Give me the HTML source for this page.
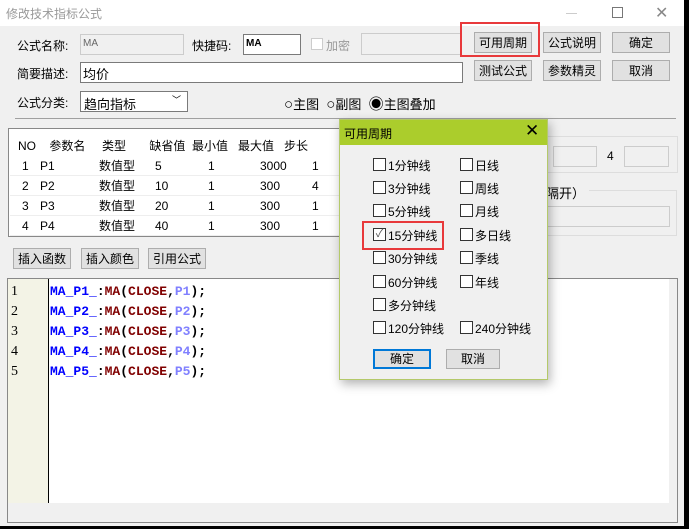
<!DOCTYPE html>
<html><head><meta charset="utf-8"><style>
*{box-sizing:border-box;margin:0;padding:0}
body{width:689px;height:529px;background:#000;position:relative;overflow:hidden;font-family:"Liberation Sans","Noto Sans CJK SC",sans-serif;font-size:12px;color:#000}
.a{position:absolute}
.btn{position:absolute;background:#e1e1e1;border:1px solid #adadad;text-align:center;line-height:20px;font-size:12px}
.inp{position:absolute;background:#fff;border:1px solid #7a7a7a}
.cb{position:absolute;width:13px;height:13px;border:1px solid #333;background:#fff}
.mono{font-family:"Liberation Mono",monospace;font-weight:bold;font-size:13px}
</style></head><body>
<div class="a" style="left:0;top:0;width:684px;height:526px;background:#f0f0f0"></div>
<div class="a" style="left:0;top:0;width:684px;height:26px;background:#fff"></div>
<div class="a" style="left:6px;top:5px;color:#999;font-size:12px">修改技术指标公式</div>
<div class="a" style="left:566px;top:13px;width:11px;height:1px;background:#ccc"></div>
<div class="a" style="left:612px;top:7px;width:11px;height:11px;border:1px solid #777"></div>
<div class="a" style="left:655px;top:3px;font-size:16px;color:#888">✕</div>

<div class="a" style="left:17px;top:37px">公式名称:</div>
<div class="inp" style="left:80px;top:34px;width:104px;height:21px;background:#f0f0f0;border-color:#ccc;font-size:10px;color:#666;padding:3px 2px">MA</div>
<div class="a" style="left:192px;top:37px">快捷码:</div>
<div class="inp" style="left:243px;top:34px;width:58px;height:21px;font-size:10px;font-weight:bold;padding:3px 2px">MA</div>
<div class="a" style="left:311px;top:38px;width:12px;height:12px;border:1px solid #ccc;background:#fff"></div>
<div class="a" style="left:326px;top:37px;color:#999">加密</div>
<div class="inp" style="left:361px;top:33px;width:100px;height:22px;background:#f0f0f0;border-color:#ccc"></div>
<div class="a" style="left:460px;top:22px;width:80px;height:35px;border:2px solid #e8393b"></div>
<div class="btn" style="left:474px;top:32px;width:58px;height:21px">可用周期</div>
<div class="btn" style="left:543px;top:32px;width:58px;height:21px">公式说明</div>
<div class="btn" style="left:612px;top:32px;width:58px;height:21px">确定</div>
<div class="a" style="left:17px;top:65px">简要描述:</div>
<div class="inp" style="left:80px;top:62px;width:383px;height:21px;padding:1px 2px;font-size:13px">均价</div>
<div class="btn" style="left:474px;top:60px;width:58px;height:21px">测试公式</div>
<div class="btn" style="left:543px;top:60px;width:58px;height:21px">参数精灵</div>
<div class="btn" style="left:612px;top:60px;width:58px;height:21px">取消</div>
<div class="a" style="left:17px;top:94px">公式分类:</div>
<div class="inp" style="left:80px;top:91px;width:108px;height:21px;padding:2px 3px;font-size:13px">趋向指标<span style="position:absolute;right:6px;top:1px;font-size:9px">﹀</span></div>
<div class="a" style="left:284px;top:93px;font-size:13px"><span style="font-size:15px">○</span>主图 &nbsp;<span style="font-size:15px">○</span>副图 &nbsp;<span style="font-size:15px">◉</span>主图叠加</div>
<div class="a" style="left:15px;top:118px;width:661px;height:1px;background:#a0a0a0"></div>

<div class="a" style="left:8px;top:128px;width:340px;height:109px;background:#fff;border:1px solid #888"></div>
<div class="a" style="left:18px;top:136px;line-height:20px;font-size:12px">
<div>NO&nbsp;&nbsp;&nbsp; 参数名&nbsp;&nbsp;&nbsp;&nbsp; 类型&nbsp;&nbsp;&nbsp;&nbsp;&nbsp;&nbsp; 缺省值&nbsp; 最小值&nbsp;&nbsp; 最大值&nbsp;&nbsp; 步长</div></div>
<div class="a" style="left:10px;top:156px;width:337px;font-size:12px;line-height:20px">
<div style="position:relative;height:20px;border-bottom:1px solid #eee"><span class="a" style="left:12px">1</span><span class="a" style="left:30px">P1</span><span class="a" style="left:89px">数值型</span><span class="a" style="left:145px">5</span><span class="a" style="left:198px">1</span><span class="a" style="left:250px">3000</span><span class="a" style="left:302px">1</span></div>
<div style="position:relative;height:20px;border-bottom:1px solid #eee"><span class="a" style="left:12px">2</span><span class="a" style="left:30px">P2</span><span class="a" style="left:89px">数值型</span><span class="a" style="left:145px">10</span><span class="a" style="left:198px">1</span><span class="a" style="left:250px">300</span><span class="a" style="left:302px">4</span></div>
<div style="position:relative;height:20px;border-bottom:1px solid #eee"><span class="a" style="left:12px">3</span><span class="a" style="left:30px">P3</span><span class="a" style="left:89px">数值型</span><span class="a" style="left:145px">20</span><span class="a" style="left:198px">1</span><span class="a" style="left:250px">300</span><span class="a" style="left:302px">1</span></div>
<div style="position:relative;height:20px;border-bottom:1px solid #eee"><span class="a" style="left:12px">4</span><span class="a" style="left:30px">P4</span><span class="a" style="left:89px">数值型</span><span class="a" style="left:145px">40</span><span class="a" style="left:198px">1</span><span class="a" style="left:250px">300</span><span class="a" style="left:302px">1</span></div>
</div>
<div class="a" style="left:540px;top:136px;width:138px;height:37px;border:1px solid #ddd"></div>
<div class="inp" style="left:553px;top:146px;width:44px;height:21px;background:#f0f0f0;border-color:#ccc"></div>
<div class="a" style="left:607px;top:149px">4</div>
<div class="inp" style="left:624px;top:146px;width:45px;height:21px;background:#f0f0f0;border-color:#ccc"></div>
<div class="a" style="left:540px;top:190px;width:137px;height:46px;border:1px solid #ddd"></div>
<div class="a" style="left:546px;top:183px;background:#f0f0f0;padding-right:4px;font-size:13px">隔开）</div>
<div class="inp" style="left:546px;top:206px;width:124px;height:21px;background:#f0f0f0;border-color:#ccc"></div>

<div class="btn" style="left:13px;top:248px;width:58px;height:21px">插入函数</div>
<div class="btn" style="left:81px;top:248px;width:58px;height:21px">插入颜色</div>
<div class="btn" style="left:148px;top:248px;width:58px;height:21px">引用公式</div>

<div class="a" style="left:7px;top:278px;width:671px;height:245px;border:1px solid #888;background:#f0f0f0"></div>
<div class="a" style="left:8px;top:279px;width:661px;height:224px;background:#fff"></div>
<div class="a" style="left:8px;top:279px;width:41px;height:224px;background:#f3f3e6;border-right:1px solid #000"></div>
<div class="a" style="left:11px;top:282px;font-family:'Liberation Serif',serif;font-size:14px;line-height:20px">1<br>2<br>3<br>4<br>5</div>
<div class="a mono" style="left:50px;top:282px;line-height:20px">
<div><span style="color:#0000ff">MA_P1_</span>:<span style="color:#800000">MA</span>(<span style="color:#800000">CLOSE</span>,<span style="color:#8080ff">P1</span>);</div>
<div><span style="color:#0000ff">MA_P2_</span>:<span style="color:#800000">MA</span>(<span style="color:#800000">CLOSE</span>,<span style="color:#8080ff">P2</span>);</div>
<div><span style="color:#0000ff">MA_P3_</span>:<span style="color:#800000">MA</span>(<span style="color:#800000">CLOSE</span>,<span style="color:#8080ff">P3</span>);</div>
<div><span style="color:#0000ff">MA_P4_</span>:<span style="color:#800000">MA</span>(<span style="color:#800000">CLOSE</span>,<span style="color:#8080ff">P4</span>);</div>
<div><span style="color:#0000ff">MA_P5_</span>:<span style="color:#800000">MA</span>(<span style="color:#800000">CLOSE</span>,<span style="color:#8080ff">P5</span>);</div>
</div>
<div class="a" style="left:669px;top:279px;width:8px;height:224px;background:#f0f0f0"></div>
<div class="a" style="left:8px;top:503px;width:661px;height:19px;background:#f0f0f0"></div>

<div class="a" style="left:339px;top:119px;width:209px;height:261px;background:#f0f0f0;border:1px solid #b4c96a;box-shadow:2px 4px 10px rgba(0,0,0,.3)"></div>
<div class="a" style="left:340px;top:120px;width:207px;height:25px;background:#abcd2c"></div>
<div class="a" style="left:344px;top:125px;font-size:12px">可用周期</div>
<div class="a" style="left:525px;top:121px;font-size:17px">✕</div>
<div class="cb" style="left:373px;top:158px"></div><div class="a" style="left:388px;top:157px">1分钟线</div>
<div class="cb" style="left:460px;top:158px"></div><div class="a" style="left:475px;top:157px">日线</div>
<div class="cb" style="left:373px;top:181px"></div><div class="a" style="left:388px;top:180px">3分钟线</div>
<div class="cb" style="left:460px;top:181px"></div><div class="a" style="left:475px;top:180px">周线</div>
<div class="cb" style="left:373px;top:204px"></div><div class="a" style="left:388px;top:203px">5分钟线</div>
<div class="cb" style="left:460px;top:204px"></div><div class="a" style="left:475px;top:203px">月线</div>
<div class="cb" style="left:373px;top:228px;font-size:11px;line-height:11px;color:#555;text-align:center">✓</div><div class="a" style="left:388px;top:227px">15分钟线</div>
<div class="a" style="left:362px;top:221px;width:82px;height:29px;border:2px solid #e8393b"></div>
<div class="cb" style="left:460px;top:228px"></div><div class="a" style="left:475px;top:227px">多日线</div>
<div class="cb" style="left:373px;top:251px"></div><div class="a" style="left:388px;top:250px">30分钟线</div>
<div class="cb" style="left:460px;top:251px"></div><div class="a" style="left:475px;top:250px">季线</div>
<div class="cb" style="left:373px;top:275px"></div><div class="a" style="left:388px;top:274px">60分钟线</div>
<div class="cb" style="left:460px;top:275px"></div><div class="a" style="left:475px;top:274px">年线</div>
<div class="cb" style="left:373px;top:298px"></div><div class="a" style="left:388px;top:297px">多分钟线</div>
<div class="cb" style="left:373px;top:321px"></div><div class="a" style="left:388px;top:320px">120分钟线</div>
<div class="cb" style="left:460px;top:321px"></div><div class="a" style="left:475px;top:320px">240分钟线</div>
<div class="btn" style="left:373px;top:349px;width:58px;height:20px;line-height:16px;border:2px solid #0078d7">确定</div>
<div class="btn" style="left:446px;top:349px;width:54px;height:20px;line-height:18px">取消</div>
</body></html>
